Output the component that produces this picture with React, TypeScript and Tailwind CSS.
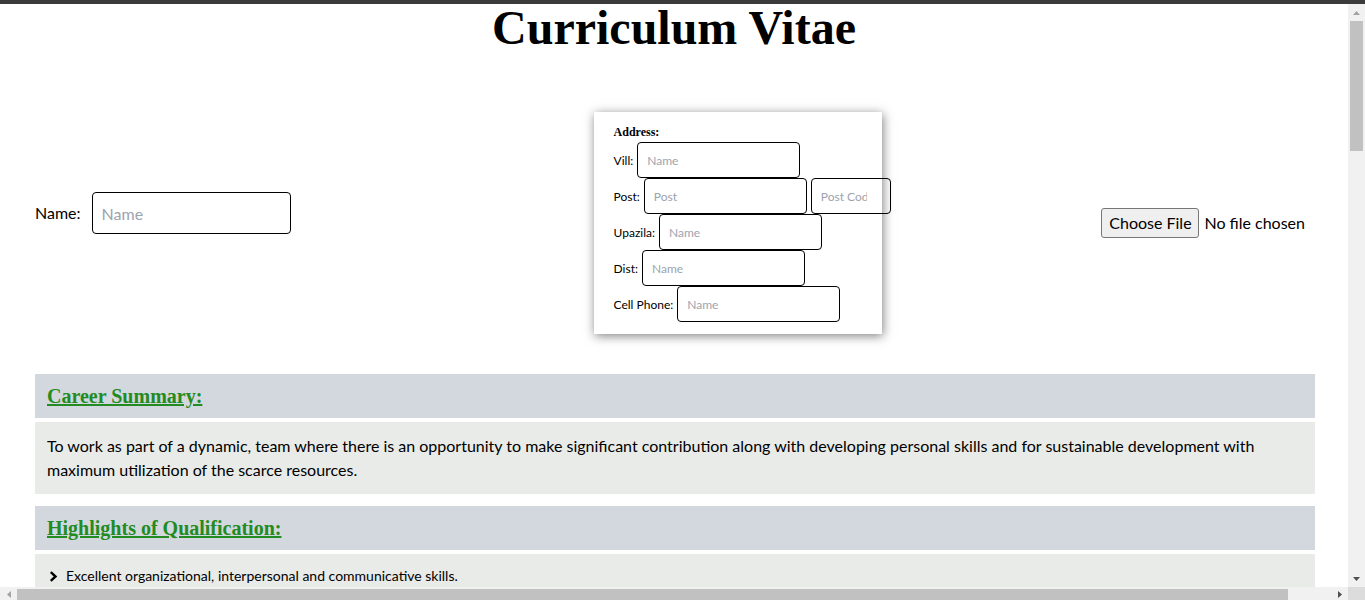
import type { ReactNode } from "react";

const sans = "font-['Lato','Liberation_Sans',sans-serif]";

function Chevron() {
  return (
    <svg width="9" height="11" viewBox="0 0 9 11" className="mr-[8px] ml-[2px] shrink-0">
      <polyline points="1.8,1.2 6.5,5.5 1.8,9.8" fill="none" stroke="black" strokeWidth="2.4" />
    </svg>
  );
}

function Section({ title, children }: { title: string; children: ReactNode }) {
  return (
    <section className="mb-3">
      <h2 className="bg-[#d3d7de] px-3 py-2 font-['Liberation_Serif',serif] text-xl leading-7 font-bold text-[#228b22] underline">
        {title}
      </h2>
      <div className="mt-1 bg-[#e9ebe8] p-3">{children}</div>
    </section>
  );
}

function Bullets({ items }: { items: string[] }) {
  return (
    <ul className="text-sm leading-5 text-black">
      {items.map((t) => (
        <li key={t} className="flex items-center">
          <Chevron />
          {t}
        </li>
      ))}
    </ul>
  );
}

function Field({ label, placeholder, extra }: { label: string; placeholder: string; extra?: boolean }) {
  return (
    <div className="flex h-9 items-center text-xs text-black">
      <span className="mr-1 pt-[1px]">{label}</span>
      <input
        placeholder={placeholder}
        className="h-9 w-[163px] shrink-0 rounded-[4px] border border-black px-[9px] text-xs placeholder:text-[#9ca3af]"
      />
      {extra && (
        <input
          placeholder="Post Code"
          className="ml-1 h-9 w-20 shrink-0 rounded-[4px] border border-black pr-[23px] pl-[9px] text-xs placeholder:text-[#9ca3af]"
        />
      )}
    </div>
  );
}

function Arrow({ dir, dark }: { dir: "up" | "down" | "left" | "right"; dark?: boolean }) {
  const pts = {
    up: "0,4 3.5,0 7,4",
    down: "0,0 3.5,4 7,0",
    left: "4,0 0,3.5 4,7",
    right: "0,0 4,3.5 0,7",
  }[dir];
  const vertical = dir === "up" || dir === "down";
  return (
    <svg width={vertical ? 7 : 4} height={vertical ? 4 : 7} viewBox={vertical ? "0 0 7 4" : "0 0 4 7"}>
      <polygon points={pts} fill={dark ? "#505050" : "#a3a3a3"} />
    </svg>
  );
}

const academic = [
  ["S.S.C", "Science", "Dhaka Board", "2015", "GPA 5.00"],
  ["H.S.C", "Science", "Dhaka Board", "2017", "GPA 4.83"],
  ["B.Sc", "Computer Science & Engineering", "National University", "2022", "CGPA 3.45"],
];

const personal = [
  ["Father's Name", ""],
  ["Mother's Name", ""],
  ["Date of Birth", ""],
  ["Nationality", "Bangladeshi"],
  ["Religion", "Islam"],
  ["Marital Status", "Unmarried"],
  ["Blood Group", ""],
  ["Permanent Address", ""],
];

export default function App() {
  return (
    <div className={`flex h-screen flex-col overflow-hidden bg-white ${sans}`}>
      <div className="h-1 shrink-0 bg-[#3b3b3b]" />

      <div className="flex min-h-0 flex-1">
        <div className="min-w-0 flex-1 overflow-hidden">
          <h1 className="text-center font-['Liberation_Serif',serif] text-5xl leading-none font-bold text-black">
            Curriculum Vitae
          </h1>

          <div className="mt-[60px] ml-[35px] flex w-[1280px] items-center">
            <div className="mb-5 flex items-center text-base text-black">
              <label className="mr-[11px]">Name:</label>
              <input
                placeholder="Name"
                className="h-[42px] w-[199px] rounded-[4px] border border-black px-[9px] text-base placeholder:text-[#9ca3af]"
              />
            </div>

            <div className="ml-[303px] w-[288px] bg-white px-5 py-3 shadow-[1px_2px_10px_rgba(0,0,0,0.5)]">
              <p className="h-[18px] font-['Liberation_Serif',serif] text-xs leading-4 font-bold text-black">
                Address:
              </p>
              <Field label="Vill:" placeholder="Name" />
              <Field label="Post:" placeholder="Post" extra />
              <Field label="Upazila:" placeholder="Name" />
              <Field label="Dist:" placeholder="Name" />
              <Field label="Cell Phone:" placeholder="Name" />
            </div>

            <div className="ml-auto flex items-center pr-[10px] text-base text-black">
              <button className="h-[30px] w-[98px] rounded-[3px] border border-[#767676] bg-[#efefef] text-base">
                Choose File
              </button>
              <span className="ml-[5px]">No file chosen</span>
            </div>
          </div>

          <main className="mt-10 ml-[35px] w-[1280px]">
            <Section title="Career Summary:">
              <p className="text-base leading-6 text-black">
                To work as part of a dynamic, team where there is an opportunity to make significant contribution
                along with developing personal skills and for sustainable development with maximum utilization of
                the scarce resources.
              </p>
            </Section>

            <Section title="Highlights of Qualification:">
              <Bullets
                items={[
                  "Excellent organizational, interpersonal and communicative skills.",
                  "Ability to work under pressure and meet deadlines.",
                  "Quick learner and adaptable to new environments.",
                  "Strong problem solving and analytical ability.",
                  "Good command over computer applications.",
                ]}
              />
            </Section>

            <Section title="Academic Qualification:">
              <table className="w-full border-collapse text-sm text-black">
                <thead>
                  <tr className="bg-[#d3d7de]">
                    {["Exam", "Group / Subject", "Board / University", "Passing Year", "Result"].map((h) => (
                      <th key={h} className="border border-[#9ca3af] px-3 py-2 text-left font-bold">
                        {h}
                      </th>
                    ))}
                  </tr>
                </thead>
                <tbody>
                  {academic.map((r) => (
                    <tr key={r[0]}>
                      {r.map((c, i) => (
                        <td key={i} className="border border-[#9ca3af] px-3 py-2">
                          {c}
                        </td>
                      ))}
                    </tr>
                  ))}
                </tbody>
              </table>
            </Section>

            <Section title="Computer Skills:">
              <Bullets
                items={[
                  "MS Word, MS Excel, MS PowerPoint.",
                  "HTML, CSS, JavaScript, React.",
                  "Internet browsing and e-mail communication.",
                ]}
              />
            </Section>

            <Section title="Personal Details:">
              <div className="grid grid-cols-[220px_20px_1fr] text-sm leading-7 text-black">
                {personal.map(([k, v]) => (
                  <div key={k} className="contents">
                    <span>{k}</span>
                    <span>:</span>
                    <input
                      placeholder={v || k}
                      className="my-[3px] h-[22px] w-[260px] rounded-[4px] border border-black px-2 text-xs placeholder:text-[#9ca3af]"
                    />
                  </div>
                ))}
              </div>
            </Section>

            <Section title="Declaration:">
              <p className="text-base leading-6 text-black">
                I do hereby declare that all the information provided above is true and correct to the best of my
                knowledge and belief.
              </p>
            </Section>
          </main>
        </div>

        {/* vertical scrollbar */}
        <div className="flex w-[17px] shrink-0 flex-col bg-[#f1f1f1]">
          <div className="flex h-[17px] items-center justify-center">
            <Arrow dir="up" />
          </div>
          <div className="mx-[2px] h-[130px] bg-[#c1c1c1]" />
          <div className="flex-1" />
          <div className="flex h-[17px] items-center justify-center">
            <Arrow dir="down" dark />
          </div>
        </div>
      </div>

      {/* horizontal scrollbar */}
      <div className="flex h-[13px] shrink-0 bg-[#f1f1f1]">
        <div className="flex w-[17px] items-center justify-center pt-[2px]">
          <Arrow dir="left" />
        </div>
        <div className="mt-[2px] w-[1271px] bg-[#c1c1c1]" />
        <div className="flex-1" />
        <div className="flex w-[17px] items-center justify-center pt-[2px]">
          <Arrow dir="right" dark />
        </div>
        <div className="w-[17px] bg-[#dcdcdc]" />
      </div>
    </div>
  );
}
